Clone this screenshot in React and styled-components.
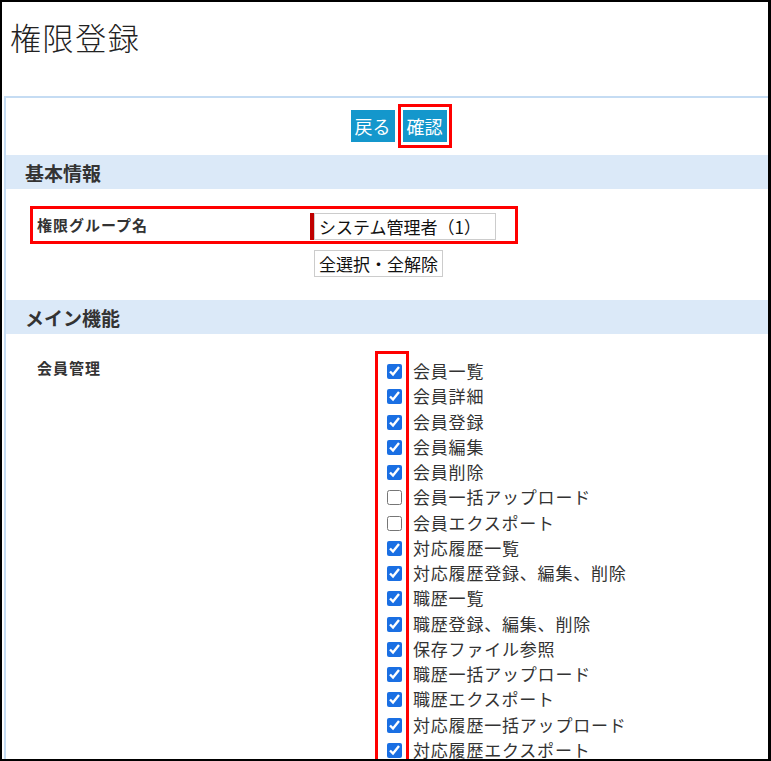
import styled, { createGlobalStyle } from "styled-components";

const GlobalStyle = createGlobalStyle`
  html, body {
    margin: 0;
    padding: 0;
    background: #fff;
  }
  body {
    font-family: "Noto Sans CJK JP", "Noto Sans", sans-serif;
    color: #333;
  }
`;

const Frame = styled.div`
  width: 771px;
  height: 761px;
  box-sizing: border-box;
  border: 2px solid #000;
  border-right-width: 3px;
  overflow: hidden;
  background: #fff;
`;

const Header = styled.div`
  height: 94px;
  box-sizing: border-box;
  padding: 13px 8px 0;
`;

const Title = styled.h1`
  margin: 0;
  font-size: 31px;
  font-weight: 300;
  letter-spacing: 1.6px;
  line-height: 44px;
  color: #222;
`;

const Panel = styled.div`
  margin-left: 2px;
  border-top: 2px solid #c5dcf3;
  border-left: 2px solid #c5dcf3;
  height: 100%;
`;

const ButtonBar = styled.div`
  display: flex;
  justify-content: center;
  align-items: center;
  gap: 3px;
  padding: 6px 0 7px 28px;
`;

const Highlight = styled.div`
  border: 3px solid #f00;
  padding: ${(p) => p.$pad || "0"};
  display: flex;
`;

const ActionButton = styled.button`
  height: 32px;
  padding: 0 4px;
  border: none;
  background: #1497cc;
  color: #fff;
  font-family: inherit;
  font-size: 18px;
  line-height: 32px;
`;

const SectionHead = styled.div`
  height: 34px;
  display: flex;
  align-items: center;
  padding-left: 19px;
  background: #dbe9f8;
  font-size: 19px;
  font-weight: bold;
  color: #333;
`;

const FormArea = styled.div`
  padding: 17px 0 23px 24px;
`;

const FieldBox = styled.div`
  width: 488px;
  box-sizing: border-box;
  border: 3px solid #f00;
  padding: 4px 19px 1px 4px;
  display: flex;
  align-items: flex-start;
`;

const FieldLabel = styled.div`
  width: 277px;
  font-size: 15px;
  font-weight: bold;
  letter-spacing: 1px;
  line-height: 20px;
  padding-top: 2px;
  color: #333;
`;

const RequiredInput = styled.div`
  display: flex;
  border-left: 4px solid #c00000;
`;

const TextInput = styled.input`
  width: 182px;
  height: 27px;
  box-sizing: border-box;
  border: 1px solid #ccc;
  padding: 0 4px;
  font-family: inherit;
  font-size: 17px;
  color: #111;
  outline: none;
`;

const ToggleRow = styled.div`
  padding: 6px 0 0 284px;
`;

const PlainButton = styled.button`
  height: 27px;
  padding: 0 4px;
  border: 1px solid #ccc;
  background: #fff;
  font-family: inherit;
  font-size: 17px;
  color: #111;
  line-height: 25px;
`;

const Group = styled.div`
  display: flex;
  align-items: flex-start;
  padding: 17px 0 0 31px;
`;

const GroupLabel = styled.div`
  width: 338px;
  font-size: 15px;
  font-weight: bold;
  letter-spacing: 1px;
  line-height: 20px;
  padding-top: 7px;
  color: #333;
`;

const CheckColumn = styled.div`
  border: 3px solid #f00;
  border-bottom: none;
  padding: 5px 4px 20px 9px;
  display: flex;
  flex-direction: column;
`;

const CheckCell = styled.div`
  height: 25.25px;
  display: flex;
  align-items: center;
`;

const Check = styled.input`
  width: 15px;
  height: 15px;
  margin: 0;
  accent-color: #1a6fe3;
`;

const LabelColumn = styled.div`
  display: flex;
  flex-direction: column;
  padding: 7px 0 0 4px;
`;

const ItemLabel = styled.div`
  height: 25.25px;
  line-height: 25.25px;
  font-size: 17px;
  letter-spacing: 0.8px;
  color: #333;
  white-space: nowrap;
`;

const items = [
  ["会員一覧", true],
  ["会員詳細", true],
  ["会員登録", true],
  ["会員編集", true],
  ["会員削除", true],
  ["会員一括アップロード", false],
  ["会員エクスポート", false],
  ["対応履歴一覧", true],
  ["対応履歴登録、編集、削除", true],
  ["職歴一覧", true],
  ["職歴登録、編集、削除", true],
  ["保存ファイル参照", true],
  ["職歴一括アップロード", true],
  ["職歴エクスポート", true],
  ["対応履歴一括アップロード", true],
  ["対応履歴エクスポート", true],
];

const App = () => {
  return (
    <>
      <GlobalStyle />
      <Frame>
        <Header>
          <Title>権限登録</Title>
        </Header>
        <Panel>
          <ButtonBar>
            <ActionButton>戻る</ActionButton>
            <Highlight $pad="3px 2px">
              <ActionButton>確認</ActionButton>
            </Highlight>
          </ButtonBar>

          <SectionHead>基本情報</SectionHead>
          <FormArea>
            <FieldBox>
              <FieldLabel>権限グループ名</FieldLabel>
              <RequiredInput>
                <TextInput defaultValue="システム管理者（1）" />
              </RequiredInput>
            </FieldBox>
            <ToggleRow>
              <PlainButton>全選択・全解除</PlainButton>
            </ToggleRow>
          </FormArea>

          <SectionHead>メイン機能</SectionHead>
          <Group>
            <GroupLabel>会員管理</GroupLabel>
            <CheckColumn>
              {items.map(([name, on]) => (
                <CheckCell key={name}>
                  <Check type="checkbox" defaultChecked={on} />
                </CheckCell>
              ))}
            </CheckColumn>
            <LabelColumn>
              {items.map(([name]) => (
                <ItemLabel key={name}>{name}</ItemLabel>
              ))}
            </LabelColumn>
          </Group>
        </Panel>
      </Frame>
    </>
  );
};

export default App;
